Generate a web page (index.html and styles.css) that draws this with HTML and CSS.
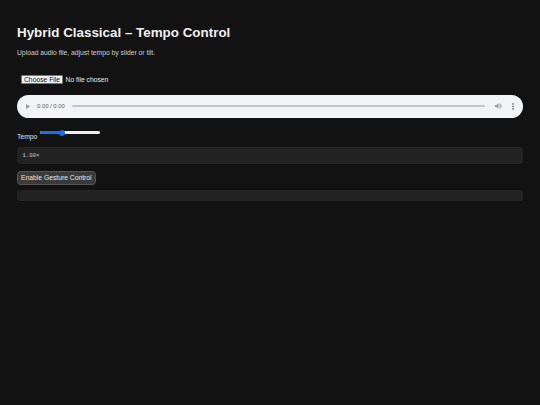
FILE: index.html
```html
<!DOCTYPE html>
<html lang="en">
<head>
<meta charset="utf-8">
<title>Hybrid Classical – Tempo Control</title>
<link rel="stylesheet" href="styles.css">
</head>
<body>
<main class="app">
  <h1 class="title">Hybrid Classical – Tempo Control</h1>
  <p class="sub">Upload audio file, adjust tempo by slider or tilt.</p>

  <div class="file-row">
    <span class="file-btn">Choose File</span>
    <span class="file-name">No file chosen</span>
  </div>

  <div class="player">
    <svg class="play" width="4" height="5" viewBox="0 0 4 5"><path d="M0 0 L4 2.5 L0 5 Z" fill="#9a9a9a"/></svg>
    <span class="time">0:00 / 0:00</span>
    <div class="track"></div>
    <svg class="vol" width="7" height="6" viewBox="0 0 7 6"><path d="M0 2 H1.5 L3.5 0.3 V5.7 L1.5 4 H0 Z" fill="#9a9a9a"/><path d="M4.6 1.6 Q5.6 3 4.6 4.4" stroke="#9a9a9a" stroke-width="0.8" fill="none"/><path d="M5.4 0.8 Q7 3 5.4 5.2" stroke="#9a9a9a" stroke-width="0.8" fill="none"/></svg>
    <svg class="dots" width="2" height="7" viewBox="0 0 2 7"><circle cx="1" cy="1" r="0.8" fill="#444"/><circle cx="1" cy="3.5" r="0.8" fill="#444"/><circle cx="1" cy="6" r="0.8" fill="#444"/></svg>
  </div>

  <div class="tempo-row">
    <label class="tempo-label">Tempo</label>
    <div class="range">
      <div class="range-fill"></div>
      <div class="range-thumb"></div>
    </div>
  </div>

  <div class="readout">1.00×</div>

  <button class="gesture">Enable Gesture Control</button>

  <div class="status"></div>
</main>
</body>
</html>
```

FILE: styles.css
```css
html, body {
  margin: 0;
  background: #121212;
}
body {
  padding: 17px;
  font-family: "Liberation Sans", Arial, sans-serif;
  color: #eaeaea;
}
.app {
  display: flex;
  flex-direction: column;
  align-items: stretch;
}
.title {
  margin: 8px 0 0;
  font-size: 13.4px;
  line-height: 16px;
  font-weight: bold;
  color: #f0f0f0;
}
.sub {
  margin: 8px 0 0;
  font-size: 6.75px;
  line-height: 8px;
  color: #d0d0d0;
}
.file-row {
  margin-top: 18px;
  display: flex;
  align-items: center;
  height: 9px;
  padding-left: 4px;
  font-size: 6.75px;
}
.file-btn {
  box-sizing: border-box;
  height: 9px;
  line-height: 8px;
  padding: 0 2px;
  background: #efefef;
  border: 0.6px solid #767676;
  border-radius: 1px;
  color: #111;
}
.file-name {
  margin-left: 2.5px;
  color: #e8e8e8;
}
.player {
  margin-top: 10.6px;
  height: 23px;
  border-radius: 12px;
  background: #f1f3f4;
  display: flex;
  align-items: center;
  padding: 0 9.3px 0 8.5px;
}
.play { flex: none; }
.time {
  margin-left: 7.5px;
  font-size: 5.9px;
  color: #5f6368;
  white-space: nowrap;
}
.track {
  flex: 1;
  margin-left: 6.7px;
  height: 1.5px;
  border-radius: 1px;
  background: #c4c6c8;
}
.vol {
  flex: none;
  margin-left: 9.5px;
}
.dots {
  flex: none;
  margin-left: 10.2px;
}
.tempo-row {
  margin-top: 13.5px;
  display: flex;
  align-items: flex-end;
  gap: 3px;
}
.tempo-label {
  font-size: 6.75px;
  line-height: 8px;
  color: #e0e0e0;
}
.range {
  position: relative;
  width: 60px;
  height: 3px;
  margin-bottom: 7.2px;
  border-radius: 1.5px;
  background: #efefef;
}
.range-fill {
  width: 22px;
  height: 3px;
  border-radius: 1.5px 0 0 1.5px;
  background: #1a6fe3;
}
.range-thumb {
  position: absolute;
  left: 19px;
  top: -1.5px;
  width: 6px;
  height: 6px;
  border-radius: 50%;
  background: #1a6fe3;
}
.readout {
  margin-top: 5.3px;
  height: 17px;
  line-height: 17px;
  padding: 0 5.5px;
  border-radius: 3px;
  background: #222222;
  font-family: "Liberation Mono", "DejaVu Sans Mono", monospace;
  font-size: 5.6px;
  color: #cfcfcf;
}
.gesture {
  align-self: flex-start;
  margin-top: 7px;
  height: 14.7px;
  padding: 0 3px;
  border: 0.6px solid #555;
  border-radius: 3.5px;
  background: #3a3a3a;
  color: #e6e6e6;
  font-family: "Liberation Sans", Arial, sans-serif;
  font-size: 6.75px;
}
.status {
  margin-top: 5px;
  height: 11px;
  border-radius: 3px;
  background: #222222;
}
```
